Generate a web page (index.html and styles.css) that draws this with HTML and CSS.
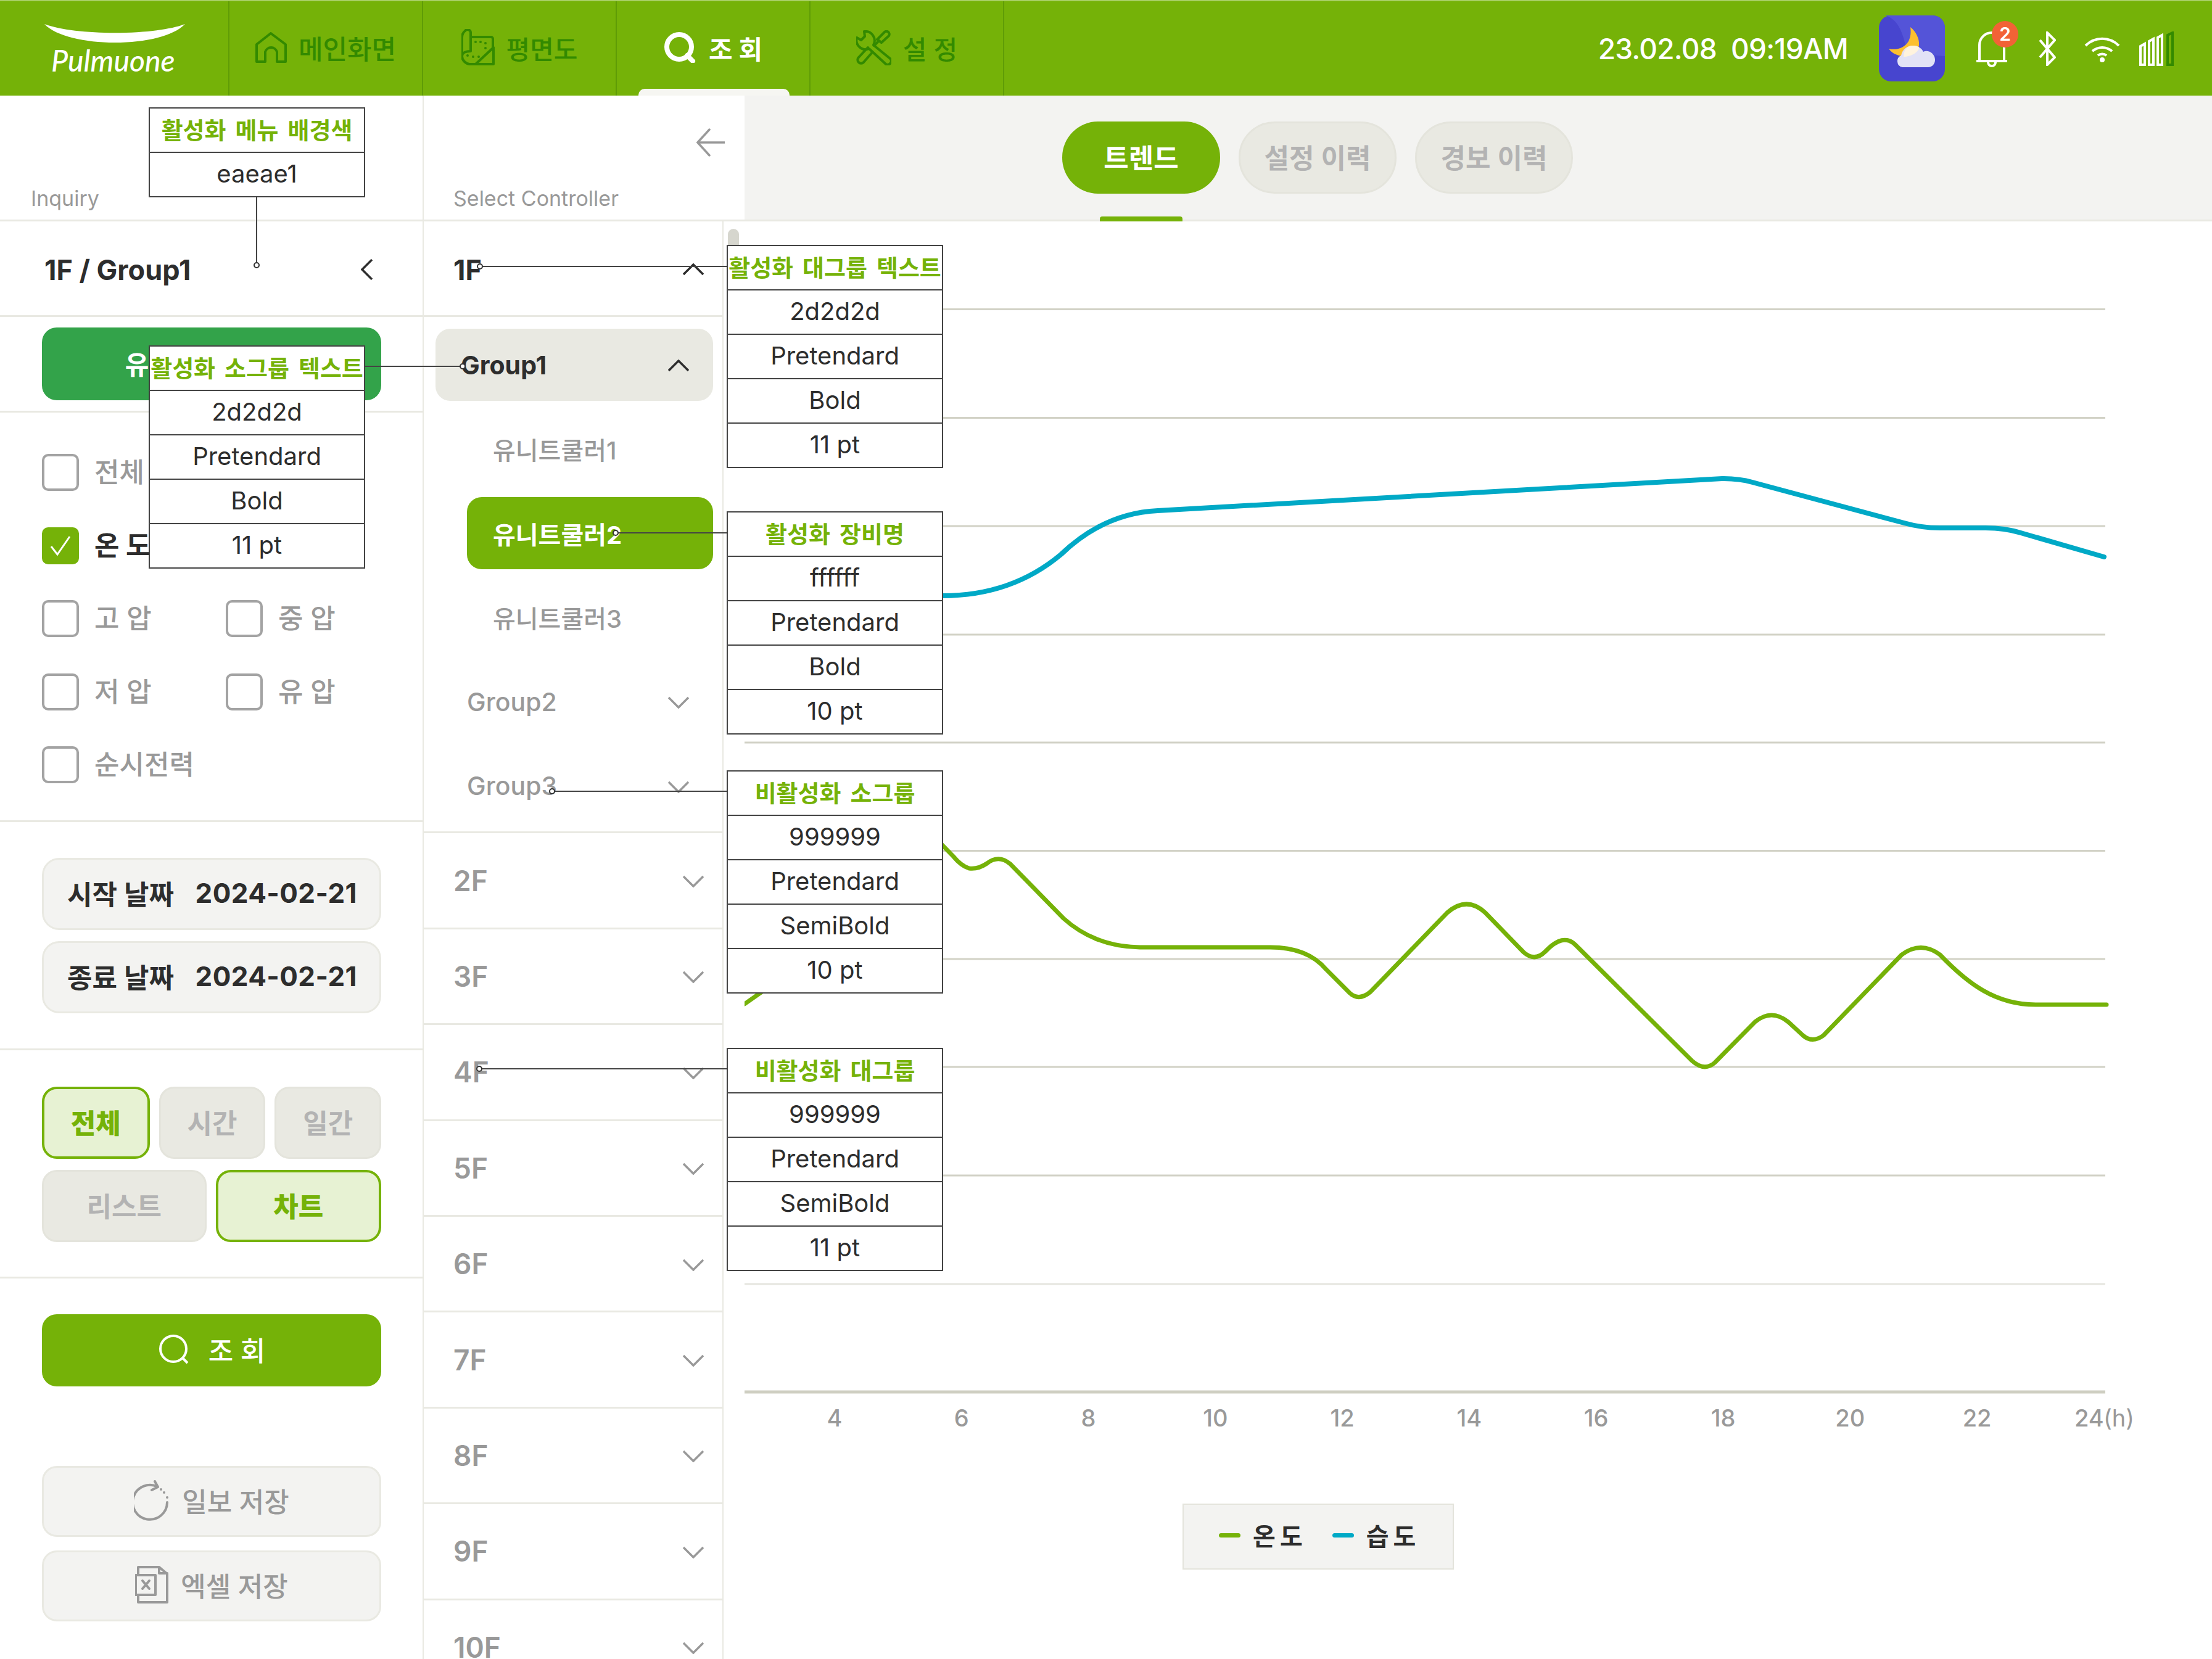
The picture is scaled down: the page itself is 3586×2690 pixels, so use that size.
FILE: index.html
```html
<!DOCTYPE html>
<html lang="ko">
<head>
    <meta charset="utf-8">
    <title>Pulmuone 조회</title>
    <link rel="stylesheet" href="styles.css">
</head>
<body>
    <header class="topbar">
        <div class="logo">
            <svg class="logo-smile" viewBox="0 0 228 30"><path d="M0 0C50 19 178 19 228 0C190 40 38 40 0 0Z"/></svg>
            <span class="logo-text">Pulmuone</span>
        </div>
        <a class="nav-tab">
            <svg class="nav-icon" width="51" height="50" viewBox="0 0 51 50"><path d="M2 48V20L25 2L49 20V48H35V32a10 10 0 0 0-19 0V48Z"/></svg>
            <span>메인화면</span>
        </a>
        <a class="nav-tab">
            <svg class="nav-icon" width="54" height="60" viewBox="17 14 54 60"><path d="M32 27H65a3 3 0 0 1 3 3V46M69 44V71H30M40 71L69 44M32 50V20a5 5 0 0 0-9-3C19 20 18 24 18 28V57M32 50C25 50 18 52 18 58C18 65 24 70 30 71M40 35h0M48 35h0M56 37h0M56 45h0M27 57h0M36 59h0M45 59h0"/></svg>
            <span>평면도</span>
        </a>
        <a class="nav-tab nav-tab-on">
            <svg class="nav-icon" width="54" height="50" viewBox="0 0 54 50"><circle cx="25" cy="24" r="20"/><path d="M38 38L47 47"/></svg>
            <span>조 회</span>
        </a>
        <a class="nav-tab">
            <svg class="nav-icon" width="57" height="57" viewBox="13 14 57 57"><path d="M26 16A15 15 0 0 1 41 38L68 60A5 5 0 0 1 60 68L34 44A15 15 0 0 1 14 26L21 30L27 24Z"/><path d="M47 29L58 18A4 4 0 0 1 66 23L54 34ZM50 31L42 39M32 42L17 58A5 5 0 0 0 25 66L39 50"/></svg>
            <span>설 정</span>
        </a>
        <div class="status">
            <span class="clock">23.02.08&nbsp; 09:19AM</span>
            <svg class="weather" width="107" height="107" viewBox="0 0 107 107">
                <rect width="107" height="107" rx="20" fill="#4745cf"/>
                <path d="M10 0C32 6 40 30 46 62L107 66V20A20 20 0 0 0 87 0Z" fill="#5454d8"/>
                <path d="M51 19C60 26 66 38 65 48C64 60 50 67 38 66C28 65 20 60 16 54C30 57 42 52 48 42C52 34 52 26 51 19Z" fill="#fdbf2f"/>
                <path d="M38 84a10 10 0 0 1-2-19C38 55 46 49 55 49C64 49 70 54 72 59C80 55 91 62 91 72C91 79 86 84 80 84Z" fill="#e2e2f6"/>
                <path d="M40 67C40 56 46 49 55 49C60 49 63 50 65 52C64 60 52 67 40 67Z" fill="#fff3de"/>
            </svg>
            <div class="bell">
                <svg width="54" height="60" viewBox="0 0 54 60"><path class="icon-line" d="M7 50V24a20 20 0 0 1 40 0V50M2 50H52M21 52a6 6 0 0 0 12 0"/></svg>
                <span class="badge">2</span>
            </div>
            <svg class="bluetooth" width="28" height="56" viewBox="0 0 28 56"><path class="icon-line" d="M2 14L26 42L14 54V2L26 14L2 42"/></svg>
            <svg width="60" height="44" viewBox="0 0 60 44"><path class="icon-line" d="M3 17a38 38 0 0 1 54 0M14 26a24 24 0 0 1 32 0M23 33a11 11 0 0 1 14 0"/><circle cx="30" cy="40" r="4" fill="#fff"/></svg>
            <svg class="signal" width="57" height="56" viewBox="0 0 57 56">
                <path class="icon-line" d="M2 54V24L9 20V54ZM16 54V16L23 12V54ZM30 54V10L37 6V54Z"/>
                <path class="signal-off" d="M46 54V6L54 2V54Z"/>
            </svg>
        </div>
    </header>

    <div class="page">
        <aside class="col-left">
            <div class="col-head"><span class="col-label">Inquiry</span></div>
            <div class="crumb">
                <span>1F / Group1</span>
                <svg width="20" height="34" viewBox="0 0 20 34"><path class="chev-dark" d="M18 1L2 17L18 33"/></svg>
            </div>
            <div class="unit-wrap"><button class="unit-btn">유니트쿨러 선택</button></div>

            <div class="checks">
                <label class="check-item"><i class="box"></i>전체</label>
                <span></span>
                <label class="check-item check-on"><i class="box"><svg width="36" height="36" viewBox="0 0 36 36"><path d="M3 19L13 32L33 3"/></svg></i>온 도</label>
                <span></span>
                <label class="check-item"><i class="box"></i>고 압</label>
                <label class="check-item"><i class="box"></i>중 압</label>
                <label class="check-item"><i class="box"></i>저 압</label>
                <label class="check-item"><i class="box"></i>유 압</label>
                <label class="check-item"><i class="box"></i>순시전력</label>
            </div>

            <div class="dates">
                <div class="date-field"><span>시작 날짜</span><b>2024-02-21</b></div>
                <div class="date-field"><span>종료 날짜</span><b>2024-02-21</b></div>
            </div>

            <div class="filters">
                <div class="filter-row">
                    <button class="chip chip-on">전체</button>
                    <button class="chip">시간</button>
                    <button class="chip">일간</button>
                </div>
                <div class="filter-row">
                    <button class="chip">리스트</button>
                    <button class="chip chip-on">차트</button>
                </div>
            </div>

            <div class="actions">
                <button class="search-btn">
                    <svg width="52" height="48" viewBox="0 0 52 48"><circle cx="25" cy="23" r="21"/><path d="M40 38L48 46"/></svg>
                    <span>조 회</span>
                </button>
                <button class="save-btn save-first">
                    <svg width="58" height="66" viewBox="14 12 58 66"><path d="M53 23A28 28 0 1 0 68 48M48 14L53 23L43 28M58 27h0M63 32h0M68 40h0"/></svg>
                    <span>일보 저장</span>
                </button>
                <button class="save-btn">
                    <svg width="54" height="64" viewBox="14 150 54 64"><path d="M19 165V153H53L66 164V210H19V198M53 153V163H66"/><rect x="15" y="166" width="32" height="32"/><path d="M26 175L37 188M37 175L26 188"/></svg>
                    <span>엑셀 저장</span>
                </button>
            </div>
        </aside>

        <nav class="col-mid">
            <div class="col-head col-head-mid">
                <span class="col-label">Select Controller</span>
                <svg class="back" width="46" height="48" viewBox="0 0 46 48"><path d="M22 2L2 24L22 46M2 24H46"/></svg>
            </div>
            <div class="tree-wrap">
                <div class="tree">
                    <div class="floor floor-open"><span>1F</span><svg class="chev" width="34" height="20" viewBox="0 0 34 20"><path d="M1 18L17 2L33 18"/></svg></div>
                    <div class="groups">
                        <div class="group group-open"><span>Group1</span><svg class="chev" width="34" height="20" viewBox="0 0 34 20"><path d="M1 18L17 2L33 18"/></svg></div>
                        <div class="unit">유니트쿨러1</div>
                        <div class="unit unit-on">유니트쿨러2</div>
                        <div class="unit">유니트쿨러3</div>
                        <div class="group"><span>Group2</span><svg class="chev" width="34" height="20" viewBox="0 0 34 20"><path d="M1 2L17 18L33 2"/></svg></div>
                        <div class="group"><span>Group3</span><svg class="chev" width="34" height="20" viewBox="0 0 34 20"><path d="M1 2L17 18L33 2"/></svg></div>
                    </div>
                    <div class="floor"><span>2F</span><svg class="chev" width="34" height="20" viewBox="0 0 34 20"><path d="M1 2L17 18L33 2"/></svg></div>
                    <div class="floor"><span>3F</span><svg class="chev" width="34" height="20" viewBox="0 0 34 20"><path d="M1 2L17 18L33 2"/></svg></div>
                    <div class="floor"><span>4F</span><svg class="chev" width="34" height="20" viewBox="0 0 34 20"><path d="M1 2L17 18L33 2"/></svg></div>
                    <div class="floor"><span>5F</span><svg class="chev" width="34" height="20" viewBox="0 0 34 20"><path d="M1 2L17 18L33 2"/></svg></div>
                    <div class="floor"><span>6F</span><svg class="chev" width="34" height="20" viewBox="0 0 34 20"><path d="M1 2L17 18L33 2"/></svg></div>
                    <div class="floor"><span>7F</span><svg class="chev" width="34" height="20" viewBox="0 0 34 20"><path d="M1 2L17 18L33 2"/></svg></div>
                    <div class="floor"><span>8F</span><svg class="chev" width="34" height="20" viewBox="0 0 34 20"><path d="M1 2L17 18L33 2"/></svg></div>
                    <div class="floor"><span>9F</span><svg class="chev" width="34" height="20" viewBox="0 0 34 20"><path d="M1 2L17 18L33 2"/></svg></div>
                    <div class="floor"><span>10F</span><svg class="chev" width="34" height="20" viewBox="0 0 34 20"><path d="M1 2L17 18L33 2"/></svg></div>
                </div>
                <div class="scrollbar"><div class="thumb"></div></div>
            </div>
        </nav>

        <main class="col-main">
            <div class="main-head">
                <button class="pill pill-on">트렌드</button>
                <button class="pill">설정 이력</button>
                <button class="pill">경보 이력</button>
            </div>
            <svg class="plot" width="2379" height="1903" viewBox="1207 359 2379 1903">
                <g class="grid">
                    <path d="M1206 501.5H3413M1206 677.5H3413M1206 853H3413M1206 1029H3413M1206 1204H3413M1206 1379.5H3413M1206 1555H3413M1206 1730H3413M1206 1906H3413"/>
                    <path class="grid-soft" d="M1206 2082H3413"/>
                    <path class="grid-axis" d="M1206 2257H3413"/>
                </g>
                <path class="line-humid" d="M1206 966L1528 966Q1640 966 1720 899Q1790 832 1877 828L2792 776Q2820 776 2841 782L3087 848Q3115 856 3145 856L3219 856Q3250 856 3276 864L3411 903"/>
                <path class="line-temp" d="M1207 1628L1241 1604L1480 1355Q1495 1345 1510 1352L1545 1388Q1558 1404 1571 1408Q1585 1410 1600 1400Q1619 1385 1638 1401L1724 1489Q1775 1535 1848 1536L2059 1536Q2120 1536 2150 1572L2188 1610Q2203 1624 2222 1608L2346 1480Q2378 1452 2408 1480L2470 1544Q2488 1560 2505 1543Q2534 1512 2554 1532L2743 1720Q2763 1738 2780 1723L2845 1657Q2872 1635 2899 1657L2923 1679Q2938 1692 2956 1679L3083 1548Q3114 1525 3145 1548C3190 1595 3235 1629 3300 1629L3415 1629"/>
            </svg>
            <div class="x-axis">
                <span>4</span><span>6</span><span>8</span><span>10</span><span>12</span><span>14</span><span>16</span><span>18</span><span>20</span><span>22</span>
                <span class="x-last">24<em>(h)</em></span>
            </div>
            <div class="legend">
                <span class="legend-item"><i class="mark mark-temp"></i>온 도</span>
                <span class="legend-item"><i class="mark mark-humid"></i>습 도</span>
            </div>
        </main>
    </div>

    <!-- design notes that lie over the screen -->
    <svg class="leaders" width="3586" height="2690" viewBox="0 0 3586 2690">
        <path d="M416 319V430M591 594H750M778 432H1178M998 864H1178M895 1283H1178M777 1733H1178"/>
        <circle cx="416" cy="430" r="4"/>
        <circle cx="750" cy="594" r="4"/>
        <circle cx="778" cy="432" r="4"/>
        <circle cx="998" cy="864" r="4"/>
        <circle cx="895" cy="1283" r="4"/>
        <circle cx="777" cy="1733" r="4"/>
    </svg>
    <div class="note note-menu"><div class="note-title">활성화 메뉴 배경색</div><div>eaeae1</div></div>
    <div class="note note-sub"><div class="note-title">활성화 소그룹 텍스트</div><div>2d2d2d</div><div>Pretendard</div><div>Bold</div><div>11 pt</div></div>
    <div class="note note-big"><div class="note-title">활성화 대그룹 텍스트</div><div>2d2d2d</div><div>Pretendard</div><div>Bold</div><div>11 pt</div></div>
    <div class="note note-unit"><div class="note-title">활성화 장비명</div><div>ffffff</div><div>Pretendard</div><div>Bold</div><div>10 pt</div></div>
    <div class="note note-sub-off"><div class="note-title">비활성화 소그룹</div><div>999999</div><div>Pretendard</div><div>SemiBold</div><div>10 pt</div></div>
    <div class="note note-big-off"><div class="note-title">비활성화 대그룹</div><div>999999</div><div>Pretendard</div><div>SemiBold</div><div>11 pt</div></div>
</body>
</html>
```

FILE: styles.css
```css
* {
    box-sizing: border-box;
}

body {
    margin: 0;
    width: 3586px;
    height: 2690px;
    overflow: hidden;
    position: relative;
    background-color: #fff;
    color: #2d2d2d;
    font-family: Inter, "Noto Sans CJK KR", sans-serif;
}

button {
    font-family: inherit;
    padding: 0 0 4px;
}

/* top bar */
.topbar {
    display: flex;
    height: 155px;
    background-color: #75b208;
    border-top: 2px solid #a8cf66;
}

.logo {
    width: 372px;
    padding: 37px 0 0 72px;
    border-right: 2px solid #5f9c06;
}

.logo-smile {
    display: block;
    width: 228px;
    height: 30px;
    fill: #fff;
}

.logo-text {
    display: block;
    margin: 2px 0 0 11px;
    color: #fff;
    font-family: Lato, sans-serif;
    font-style: italic;
    font-weight: 500;
    font-size: 48px;
    line-height: 54px;
}

.nav-tab {
    position: relative;
    display: flex;
    align-items: center;
    justify-content: center;
    gap: 19px;
    width: 314px;
    padding-bottom: 3px;
    border-right: 2px solid #5f9c06;
    color: #338a00;
    font-size: 42px;
    font-weight: 500;
}

.nav-tab:nth-of-type(1) {
    font-size: 43px;
}

.nav-icon {
    fill: none;
    stroke: #338a00;
    stroke-width: 4;
    stroke-linecap: round;
    stroke-linejoin: round;
}

.nav-tab-on {
    color: #fff;
    font-weight: 700;
}

.nav-tab-on .nav-icon {
    stroke: #fff;
    stroke-width: 8;
}

.nav-tab-on::after {
    content: "";
    position: absolute;
    left: 35px;
    bottom: 0;
    width: 245px;
    height: 11px;
    border-radius: 10px 10px 0 0;
    background-color: #f6f6f2;
}

.status {
    display: flex;
    align-items: center;
    margin-left: auto;
    padding-right: 61px;
}

.clock {
    margin-right: 50px;
    color: #fff;
    font-size: 46px;
    font-weight: 500;
    letter-spacing: -0.75px;
}

.weather {
    margin-right: 49px;
}

.icon-line {
    fill: none;
    stroke: #fff;
    stroke-width: 4;
}

.bell {
    position: relative;
    width: 54px;
    height: 60px;
    margin: 0 49px 0 0;
}

.badge {
    position: absolute;
    left: 27px;
    top: -15px;
    width: 43px;
    height: 43px;
    border-radius: 50%;
    background-color: #f26236;
    color: #fff;
    font-size: 30px;
    font-weight: 600;
    line-height: 43px;
    text-align: center;
}

.bluetooth {
    margin-right: 45px;
}

.signal {
    margin-left: 30px;
}

.signal-off {
    fill: none;
    stroke: #338a00;
    stroke-width: 4;
}

/* columns */
.page {
    display: flex;
    height: 2535px;
}

.col-left {
    width: 687px;
    border-right: 2px solid #e9e9e2;
}

.col-mid {
    width: 520px;
    overflow: hidden;
}

.col-main {
    flex: 1;
}

.col-head {
    height: 204px;
    padding-top: 145px;
    border-bottom: 3px solid #e9e9e2;
}

.col-label {
    color: #999;
    font-size: 34px;
    line-height: 44px;
}

.col-left .col-label {
    margin-left: 50px;
}

.col-head-mid {
    position: relative;
    padding-left: 48px;
}

.back {
    position: absolute;
    left: 442px;
    top: 52px;
    fill: none;
    stroke: #999;
    stroke-width: 3.5;
}

.crumb {
    display: flex;
    align-items: center;
    justify-content: space-between;
    height: 155px;
    padding: 4px 80px 0 72px;
    border-bottom: 3px solid #e9e9e2;
    font-size: 45px;
    font-weight: 700;
}

.chev-dark {
    fill: none;
    stroke: #2d2d2d;
    stroke-width: 3.5;
}

.unit-wrap {
    padding: 17px 67px 17px 68px;
    border-bottom: 3px solid #e9e9e2;
}

.unit-btn {
    display: block;
    width: 100%;
    height: 118px;
    border: 0;
    border-radius: 24px;
    background-color: #33a34a;
    color: #fff;
    font-size: 42px;
    font-weight: 700;
}

.checks {
    display: grid;
    grid-template-columns: 298px 1fr;
    grid-auto-rows: 60px;
    row-gap: 58.5px;
    align-content: start;
    height: 664px;
    padding: 67px 0 0 68px;
    border-bottom: 3px solid #e9e9e2;
}

.check-item {
    display: flex;
    align-items: center;
    gap: 25px;
    color: #999;
    font-size: 44px;
    line-height: 56px;
    font-weight: 500;
}

.box {
    display: flex;
    align-items: center;
    justify-content: center;
    width: 60px;
    height: 60px;
    border: 4px solid #a3a3a3;
    border-radius: 10px;
}

.check-on {
    color: #2d2d2d;
    font-weight: 700;
}

.check-on .box {
    border-color: #75b208;
    background-color: #75b208;
}

.box svg {
    fill: none;
    stroke: #fff;
    stroke-width: 3;
}

.dates {
    display: flex;
    flex-direction: column;
    gap: 18px;
    height: 370px;
    padding: 58px 67px 0 68px;
    border-bottom: 3px solid #e9e9e2;
}

.date-field {
    display: flex;
    align-items: center;
    justify-content: space-between;
    height: 117px;
    padding: 0 36px 3px 38px;
    border: 3px solid #e9e9e2;
    border-radius: 28px;
    background-color: #f3f3f1;
    font-size: 44px;
    font-weight: 600;
}

.date-field b {
    font-size: 44px;
    font-weight: 700;
    letter-spacing: 0.4px;
}

.filters {
    display: flex;
    flex-direction: column;
    gap: 18px;
    height: 370px;
    padding: 59px 67px 0 68px;
    border-bottom: 3px solid #e9e9e2;
}

.filter-row {
    display: flex;
    gap: 15px;
}

.chip {
    flex: 1;
    height: 117px;
    border: 3px solid #e4e4dc;
    border-radius: 24px;
    background-color: #e9e9e2;
    color: #b3b3b3;
    font-size: 44px;
    font-weight: 600;
}

.chip-on {
    border: 4px solid #75b208;
    background-color: #e7f2d3;
    color: #75b208;
    font-weight: 800;
}

.actions {
    padding: 58px 67px 0 68px;
}

.search-btn {
    display: flex;
    align-items: center;
    justify-content: center;
    gap: 30px;
    width: 100%;
    height: 117px;
    border: 0;
    border-radius: 24px;
    background-color: #75b208;
    color: #fff;
    font-size: 44px;
    font-weight: 500;
}

.search-btn svg {
    fill: none;
    stroke: #fff;
    stroke-width: 4;
}

.save-btn {
    display: flex;
    align-items: center;
    justify-content: center;
    gap: 20px;
    width: 100%;
    height: 115px;
    margin-top: 22px;
    border: 3px solid #e9e9e2;
    border-radius: 24px;
    background-color: #f3f3f1;
    color: #999;
    font-size: 44px;
    font-weight: 500;
}

.save-first {
    margin-top: 129px;
}

.save-btn svg {
    flex: none;
    fill: none;
    stroke: #999;
    stroke-width: 4;
    stroke-linecap: round;
    stroke-linejoin: round;
}

/* controller tree */
.tree-wrap {
    display: flex;
}

.tree {
    width: 486px;
    flex: none;
    border-right: 2px solid #e9e9e2;
}

.floor {
    display: flex;
    align-items: center;
    justify-content: space-between;
    height: 155.4px;
    padding: 0 30px 0 48px;
    border-bottom: 3px solid #e9e9e2;
    color: #999;
    font-size: 46px;
    font-weight: 600;
}

.chev {
    margin-top: 3px;
    fill: none;
    stroke: currentColor;
    stroke-width: 3.5;
}

.floor-open {
    padding-top: 4px;
    color: #2d2d2d;
    font-size: 45px;
    font-weight: 700;
}

.floor-open .chev {
    margin-top: -1px;
}

.groups {
    display: flex;
    flex-direction: column;
    gap: 19.5px;
    height: 837px;
    padding: 19px 15px 0 19px;
    border-bottom: 3px solid #e9e9e2;
}

.group,
.unit {
    display: flex;
    align-items: center;
    flex: none;
    height: 117px;
    border-radius: 24px;
    color: #999;
    font-size: 41px;
    font-weight: 500;
}

.group {
    justify-content: space-between;
    margin-left: 51px;
    padding-right: 39px;
}

.group-open {
    margin-left: 0;
    padding-left: 41px;
    background-color: #e9e9e2;
    color: #2d2d2d;
    font-weight: 700;
}

.unit {
    margin-left: 51px;
    padding-left: 42px;
    font-size: 40px;
}

.unit-on {
    background-color: #75b208;
    color: #fff;
    font-weight: 700;
}

.scrollbar {
    width: 34px;
    flex: none;
    padding: 12px 0 0 7px;
}

.thumb {
    width: 18px;
    height: 350px;
    border-radius: 9px;
    background-color: #d6d6ce;
}

/* main chart */
.main-head {
    display: flex;
    gap: 30px;
    height: 204px;
    padding: 42px 0 0 515px;
    background-color: #f3f3f1;
    border-bottom: 3px solid #e9e9e2;
}

.pill {
    position: relative;
    width: 256px;
    height: 117px;
    border: 3px solid #e4e4dc;
    border-radius: 58px;
    background-color: #e9e9e2;
    color: #b3b3b3;
    font-size: 44px;
    font-weight: 600;
}

.pill-on {
    border: 0;
    background-color: #75b208;
    color: #fff;
    font-weight: 700;
}

.pill-on::after {
    content: "";
    position: absolute;
    left: 61px;
    top: 154px;
    width: 134px;
    height: 8px;
    border-radius: 4px 4px 0 0;
    background-color: #75b208;
}

.plot {
    display: block;
    fill: none;
}

.grid path {
    stroke: #d2d2c6;
    stroke-width: 3;
}

.grid .grid-soft {
    stroke: #e6e6df;
}

.grid .grid-axis {
    stroke: #cfcfc2;
    stroke-width: 5;
}

.line-humid {
    stroke: #00a9c6;
    stroke-width: 8;
    stroke-linecap: round;
}

.line-temp {
    stroke: #75b208;
    stroke-width: 7;
    stroke-linecap: round;
}

.x-axis {
    display: flex;
    height: 75px;
    padding: 14px 0 0 43px;
    color: #999;
    font-size: 38px;
    font-weight: 500;
    line-height: 46px;
}

.x-axis span {
    width: 205.8px;
    flex: none;
    text-align: center;
}

.x-axis .x-last {
    position: relative;
    left: -24px;
}

.x-axis em {
    position: absolute;
    left: 126px;
    top: 0;
    font-style: normal;
    font-weight: 400;
}

.legend {
    display: flex;
    align-items: center;
    gap: 48px;
    width: 440px;
    height: 107px;
    margin: 101px 0 0 710px;
    padding: 0 0 5px 57px;
    border: 2px solid #e4e4dc;
    background-color: #f3f3f1;
}

.legend-item {
    display: flex;
    align-items: center;
    gap: 20px;
    font-size: 40px;
    font-weight: 600;
    word-spacing: -3px;
}

.mark {
    width: 35px;
    height: 7px;
    border-radius: 4px;
}

.mark-temp {
    background-color: #75b208;
}

.mark-humid {
    background-color: #00a9c6;
}

/* annotations over the screen */
.leaders {
    position: absolute;
    left: 0;
    top: 0;
}

.leaders path {
    fill: none;
    stroke: #444;
    stroke-width: 2;
}

.leaders circle {
    fill: #fff;
    stroke: #333;
    stroke-width: 2;
}

.note {
    position: absolute;
    width: 351px;
    border: 2px solid #444;
    background-color: #fff;
    font-size: 40px;
    text-align: center;
}

.note div {
    height: 72px;
    border-top: 2px solid #444;
    line-height: 68px;
    white-space: nowrap;
}

.note .note-title {
    height: 70px;
    border-top: 0;
    color: #75b208;
    font-size: 38px;
    font-weight: 700;
    line-height: 70px;
    word-spacing: 6px;
}

.note-menu {
    left: 241px;
    top: 174px;
}

.note-sub {
    left: 241px;
    top: 560px;
}

.note-big {
    left: 1178px;
    top: 397px;
}

.note-unit {
    left: 1178px;
    top: 829px;
}

.note-sub-off {
    left: 1178px;
    top: 1249px;
}

.note-big-off {
    left: 1178px;
    top: 1699px;
}
```
